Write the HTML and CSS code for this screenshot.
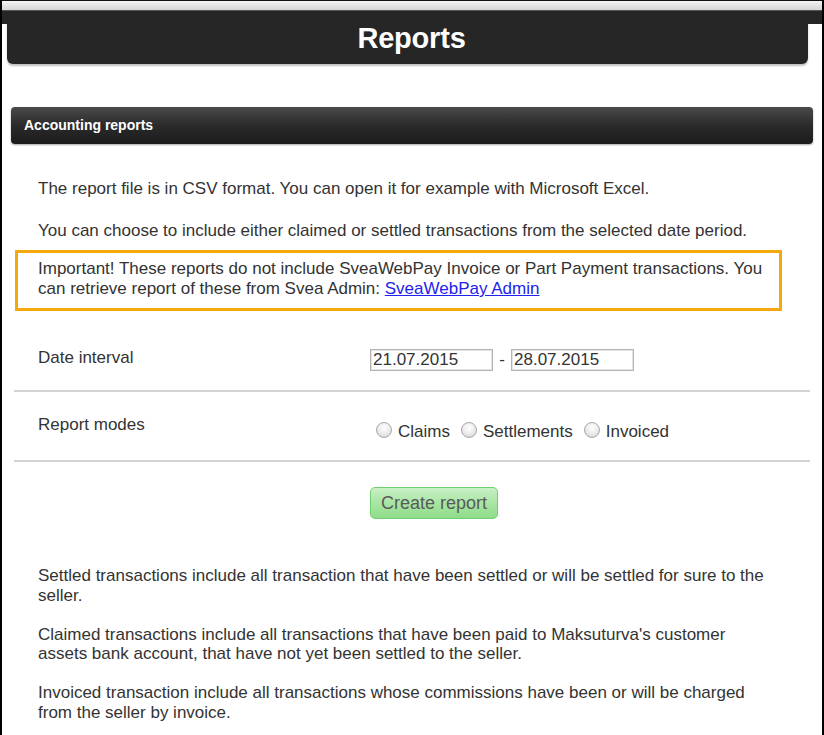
FILE: index.html
```html
<!DOCTYPE html>
<html>
<head>
<meta charset="utf-8">
<title>Reports</title>
<link rel="stylesheet" href="styles.css">
</head>
<body>
<div class="frame">
  <div class="top-strip"></div>
  <div class="masthead"></div>
  <div class="title-bar"><h1 class="title">Reports</h1></div>

  <div class="section-bar">Accounting reports</div>

  <div class="content">
    <p class="text first">The report file is in CSV format. You can open it for example with Microsoft Excel.</p>
    <p class="text">You can choose to include either claimed or settled transactions from the selected date period.</p>
    <div class="notice">Important! These reports do not include SveaWebPay Invoice or Part Payment transactions. You can retrieve report of these from Svea Admin: <a href="#" class="link">SveaWebPay Admin</a></div>

    <div class="form-row date-row">
      <div class="label">Date interval</div>
      <div class="controls">
        <input class="date" type="text" value="21.07.2015">
        <span class="dash">-</span>
        <input class="date" type="text" value="28.07.2015">
      </div>
    </div>
    <div class="form-row mode-row">
      <div class="label">Report modes</div>
      <div class="controls radios">
        <label class="radio-label"><input type="radio" name="mode" class="radio">Claims</label>
        <label class="radio-label"><input type="radio" name="mode" class="radio">Settlements</label>
        <label class="radio-label"><input type="radio" name="mode" class="radio">Invoiced</label>
      </div>
    </div>
    <div class="button-row">
      <button class="btn">Create report</button>
    </div>

    <div class="notes">
      <p class="text">Settled transactions include all transaction that have been settled or will be settled for sure to the seller.</p>
      <p class="text">Claimed transactions include all transactions that have been paid to Maksuturva's customer assets bank account, that have not yet been settled to the seller.</p>
      <p class="text">Invoiced transaction include all transactions whose commissions have been or will be charged from the seller by invoice.</p>
    </div>
  </div>
</div>
</body>
</html>
```
FILE: styles.css
```css
html, body {
  margin: 0;
  padding: 0;
  background: #ffffff;
}
body {
  font-family: "Liberation Sans", Arial, sans-serif;
  color: #333333;
}
.frame {
  width: 824px;
  height: 735px;
  box-sizing: border-box;
  border-left: 2px solid #000;
  border-right: 2px solid #000;
  overflow: hidden;
  background: #fff;
}
.top-strip {
  height: 9px;
  margin: 0 -2px;
  border-top: 1px solid #111;
  background: linear-gradient(#f4f4f4, #d4d4d4);
  border-bottom: 1px solid #555;
}
.masthead {
  height: 13px;
  margin: 0 -2px;
  background: #262626;
}
.title-bar {
  height: 42px;
  margin: 0 14px 0 5px;
  background: #262626;
  border-radius: 0 0 6px 6px;
  box-shadow: 0 2px 2px rgba(0,0,0,0.25);
  text-align: center;
  padding-left: 8px;
}
.title {
  margin: -2px 0 0 0;
  font-size: 29px;
  line-height: 32px;
  font-weight: bold;
  color: #ffffff;
  letter-spacing: -0.2px;
}
.section-bar {
  margin: 43px 9px 0 9px;
  height: 37px;
  box-sizing: border-box;
  border-radius: 4px;
  background: linear-gradient(#4a4a4a, #2a2a2a 50%, #1c1c1c);
  box-shadow: 0 1px 2px rgba(0,0,0,0.35);
  color: #fff;
  font-weight: bold;
  font-size: 14px;
  line-height: 37px;
  padding-left: 13px;
}
.content {
  padding: 0 12px 0 13px;
}
.text {
  margin: 22px 46px 0 23px;
  font-size: 17px;
  line-height: 19.5px;
  color: #333;
}
.text.first {
  margin-top: 35px;
}
.notice {
  margin: 10px 28px 0 0;
  border: 3px solid #f5a80c;
  padding: 6px 8px 9px 20px;
  font-size: 17px;
  line-height: 20px;
  color: #333;
}
.link {
  color: #2222ee;
  text-decoration: underline;
}
.form-row {
  display: grid;
  grid-template-columns: 356px 1fr;
  margin-left: -1px;
  border-bottom: 2px solid #d3d3d3;
}
.label {
  padding-left: 24px;
  font-size: 17px;
  line-height: 19px;
}
.date-row {
  margin-top: 15px;
  padding: 22px 0 19px 0;
}
.mode-row {
  padding: 23px 0 19px 0;
}
.controls {
  display: flex;
  align-items: center;
}
.date-row .controls {
  padding-top: 1px;
}
.date {
  width: 123px;
  height: 22px;
  box-sizing: border-box;
  border: 1px solid #b5b5b5;
  box-shadow: inset 0 0 0 1px #e2e2e2;
  padding: 0 2px;
  margin: 0;
  font-family: "Liberation Sans", Arial, sans-serif;
  font-size: 17px;
  color: #333;
  background: #fff;
}
.dash {
  width: 18px;
  text-align: center;
  font-size: 17px;
}
.radios {
  padding-top: 7px;
  gap: 5px;
}
.radio-label {
  display: flex;
  align-items: center;
  font-size: 17px;
  line-height: 19px;
  color: #333;
}
.radio {
  -webkit-appearance: none;
  appearance: none;
  width: 16px;
  height: 16px;
  margin: 0 6px 0 6px;
  border-radius: 50%;
  border: 1px solid #a8a8a8;
  background: radial-gradient(circle at 50% 35%, #ffffff 0%, #eeeeee 45%, #cfcfcf 100%);
  box-sizing: border-box;
  position: relative;
  top: -2px;
}
.button-row {
  display: flex;
  padding-left: 355px;
  margin-top: 25px;
}
.btn {
  width: 128px;
  height: 32px;
  border: 1px solid #6fd16f;
  border-radius: 5px;
  background: linear-gradient(#c9f0c6, #a8e6a3 50%, #8fdc8a);
  color: #5a5a5a;
  font-family: "Liberation Sans", Arial, sans-serif;
  font-size: 18px;
  padding: 0;
  margin: 0;
}
.notes {
  margin-top: 47px;
}
.notes .text {
  margin-top: 19.5px;
}
.notes .text:first-child {
  margin-top: 0;
}
```
